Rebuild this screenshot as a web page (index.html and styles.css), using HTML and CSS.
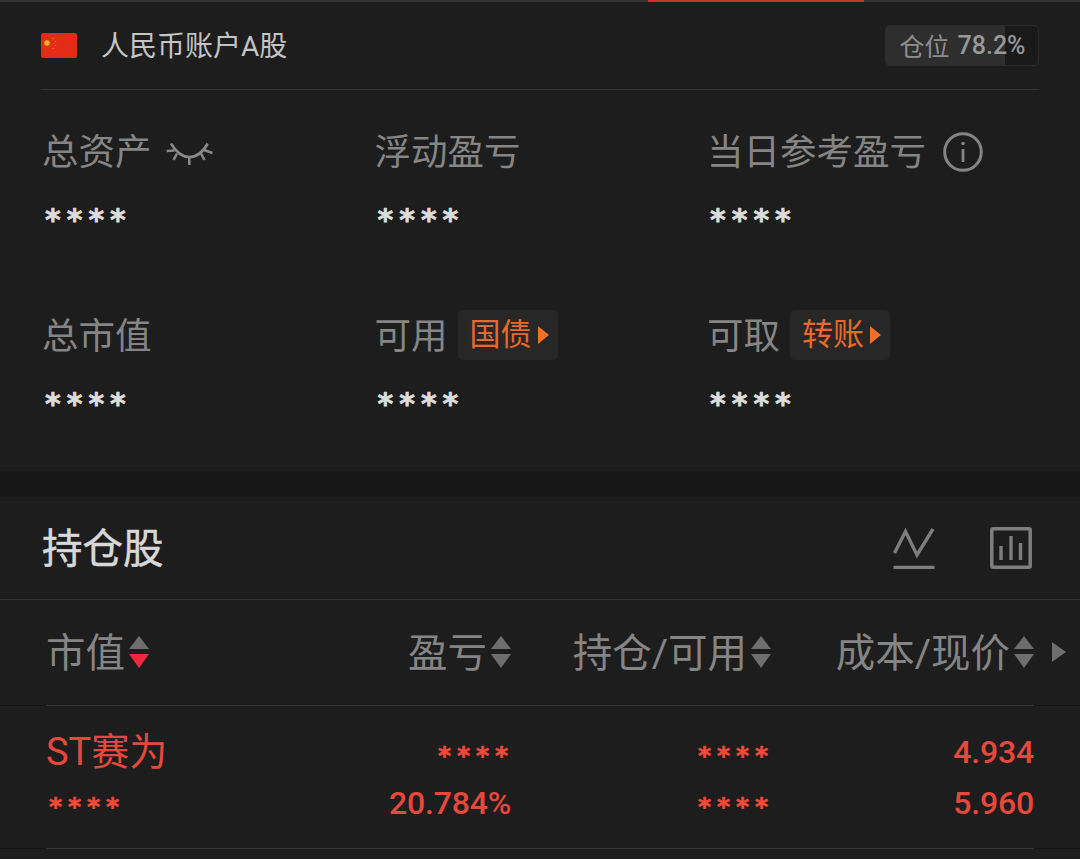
FILE: index.html
```html
<!DOCTYPE html>
<html lang="zh-CN">
<head>
<meta charset="utf-8">
<title>持仓</title>
<link rel="stylesheet" href="styles.css">
</head>
<body>
<div class="page">
  <section class="account">
    <div class="tabline"><span class="tabmark"></span></div>
    <div class="account-head">
      <svg class="flag" viewBox="0 0 36 25" width="36" height="25">
        <rect width="36" height="25" rx="2" fill="#e32b17"/>
        <circle cx="6" cy="10" r="2.800" fill="#f5b21a"/>
        <circle cx="12" cy="5.500" r=".8" fill="#f0801a"/>
        <circle cx="14.500" cy="8.500" r=".8" fill="#f0801a"/>
        <circle cx="14.500" cy="12.500" r=".8" fill="#f0801a"/>
        <circle cx="12" cy="15.500" r=".8" fill="#f0801a"/>
      </svg>
      <span class="account-name">人民币账户A股</span>
      <span class="position">仓位 <b class="position-num">78.2%</b></span>
    </div>
    <div class="metrics">
      <div class="metric">
        <div class="label">总资产
          <svg class="eye" viewBox="0 0 47 23" width="47" height="23" fill="none" stroke="#888" stroke-width="2.600">
            <path d="M5 1.500C10 10 16 15 23.300 15S37 10 41.700 1.500"/>
            <path d="M.7 9 8.500 8.500M11 11.500 7.600 18M23.300 15V23M35 11.500 38.500 18M38 8 46.500 11"/>
          </svg>
        </div>
        <div class="stars">****</div>
      </div>
      <div class="metric">
        <div class="label">浮动盈亏</div>
        <div class="stars">****</div>
      </div>
      <div class="metric">
        <div class="label">当日参考盈亏
          <svg class="info" viewBox="0 0 40 40" width="40" height="40" fill="none" stroke="#858585">
            <circle cx="20" cy="20" r="18.300" stroke-width="3"/>
            <path d="M20 17V30" stroke-width="2.800"/>
            <circle cx="20" cy="11.500" r="1.800" fill="#858585" stroke="none"/>
          </svg>
        </div>
        <div class="stars">****</div>
      </div>
      <div class="metric">
        <div class="label">总市值</div>
        <div class="stars">****</div>
      </div>
      <div class="metric">
        <div class="label">可用<span class="action">国债<i class="action-arrow"></i></span></div>
        <div class="stars">****</div>
      </div>
      <div class="metric">
        <div class="label">可取<span class="action">转账<i class="action-arrow"></i></span></div>
        <div class="stars">****</div>
      </div>
    </div>
  </section>

  <section class="holdings">
    <div class="holdings-head">
      <h2 class="holdings-title">持仓股</h2>
      <svg class="tool-line" viewBox="0 0 42 41" width="42" height="41" fill="none" stroke="#7d7d7d" stroke-width="3.400">
        <path d="M1.500 25 12.500 3.500 24 27 40 1"/>
        <path d="M.5 39.500H41.500"/>
      </svg>
      <svg class="tool-bars" viewBox="0 0 42 42" width="42" height="42" fill="none" stroke="#7d7d7d">
        <rect x="1.800" y="1.800" width="38.400" height="38.400" rx="1.500" stroke-width="3.500"/>
        <path d="M11 19V33M21 9V33M30.500 16V33" stroke-width="3.400"/>
      </svg>
    </div>

    <div class="band band-head">
      <div class="cols cols-head">
        <div class="th th-left">市值
          <svg class="sort" viewBox="0 0 20 33" width="20" height="33"><path d="M10 0 20 13H0Z" fill="#6e6e6e"/><path d="M0 18H20L10 32Z" fill="#f0283c"/></svg>
        </div>
        <div class="th">盈亏
          <svg class="sort" viewBox="0 0 20 33" width="20" height="33"><path d="M10 0 20 13H0Z" fill="#6e6e6e"/><path d="M0 18H20L10 32Z" fill="#6e6e6e"/></svg>
        </div>
        <div class="th">持仓/可用
          <svg class="sort" viewBox="0 0 20 33" width="20" height="33"><path d="M10 0 20 13H0Z" fill="#6e6e6e"/><path d="M0 18H20L10 32Z" fill="#6e6e6e"/></svg>
        </div>
        <div class="th">成本/现价
          <svg class="sort" viewBox="0 0 20 33" width="20" height="33"><path d="M10 0 20 13H0Z" fill="#6e6e6e"/><path d="M0 18H20L10 32Z" fill="#6e6e6e"/></svg>
        </div>
      </div>
      <i class="more"></i>
    </div>

    <div class="band band-row">
      <div class="cols cols-row">
        <div class="cell cell-left">
          <div class="name">ST赛为</div>
          <div class="stars-red">****</div>
        </div>
        <div class="cell">
          <div class="stars-red">****</div>
          <div class="num">20.784%</div>
        </div>
        <div class="cell">
          <div class="stars-red">****</div>
          <div class="stars-red">****</div>
        </div>
        <div class="cell">
          <div class="num">4.934</div>
          <div class="num">5.960</div>
        </div>
      </div>
    </div>
  </section>
</div>
</body>
</html>
```

FILE: styles.css
```css
* { box-sizing: border-box; }
html, body { margin: 0; padding: 0; }
body {
  width: 1080px;
  height: 859px;
  overflow: hidden;
  background: #171717;
  font-family: "Roboto", "Noto Sans CJK SC", sans-serif;
}
.page { display: flex; flex-direction: column; gap: 26px; }

.account { height: 471px; background: #1d1d1d; }
.tabline { height: 2px; background: #333; position: relative; }
.tabmark { display: block; height: 2px; width: 216px; margin-left: 648px; background: #c8342f; }
.account-head {
  display: flex;
  align-items: center;
  height: 88px;
  margin: 0 41px;
  border-bottom: 1px solid #333;
}
.flag { flex: none; }
.account-name { margin-left: 24px; margin-bottom: 4px; font-size: 28px; color: #c4c4c4; }
.position {
  margin-left: auto;
  width: 154px;
  height: 41px;
  display: flex;
  align-items: center;
  justify-content: center;
  gap: 8px;
  padding: 0 0 1px 1px;
  border: 1px solid #2b2b2b;
  border-radius: 5px;
  background: linear-gradient(to right, #2e2e2e 78.2%, #1a1a1a 78.2%);
  font-size: 25px;
  color: #8e8e8e;
}
.position-num { font-weight: 500; font-size: 25px; color: #989898; }

.metrics {
  display: grid;
  grid-template-columns: 332.500px 332.500px 1fr;
  grid-auto-rows: 184px;
  padding: 38px 0 0 42px;
}
.label {
  display: flex;
  align-items: center;
  height: 50px;
  font-size: 36.500px;
  line-height: 50px;
  color: #858585;
}
.eye { margin-left: 14px; margin-top: 1px; }
.info { margin-left: 17px; margin-top: -2px; }
.action {
  display: flex;
  align-items: center;
  height: 50px;
  margin-left: 10px;
  margin-top: -4px;
  padding: 0 9px 0 12px;
  border-radius: 5px;
  background: #272727;
  font-size: 31px;
  color: #e8692a;
}
.action-arrow {
  width: 0;
  height: 0;
  margin-left: 6px;
  border-left: 11px solid #f0702a;
  border-top: 9.500px solid transparent;
  border-bottom: 9.500px solid transparent;
}
.stars {
  margin-top: 17px;
  margin-left: 3px;
  height: 32px;
  font-family: "DejaVu Sans", sans-serif;
  font-weight: 700;
  font-size: 30px;
  line-height: 50px;
  letter-spacing: 6px;
  color: #dcdcdc;
  -webkit-text-stroke: 0.7px #dcdcdc;
}

.holdings { height: 362px; background: #1d1d1d; }
.holdings-head {
  display: flex;
  align-items: center;
  height: 103px;
  padding: 0 48px 0 42px;
  border-bottom: 1px solid #333;
}
.holdings-title {
  margin: -6px auto 0 0;
  font-size: 40.500px;
  font-weight: 400;
  color: #d8d8d8;
  -webkit-text-stroke: 0.5px #d8d8d8;
}
.tool-bars { margin-left: 55px; }

.band {
  display: flex;
  padding-left: 46px;
  border-bottom: 1px solid #141414;
}
.band-head { height: 106px; align-items: stretch; }
.band-row { height: 143px; }
.cols {
  display: grid;
  grid-template-columns: 201px 264px 260px 263px;
  width: 988px;
  margin-bottom: -1px;
  border-bottom: 1px solid #353535;
}
.th {
  display: flex;
  align-items: center;
  justify-content: flex-end;
  padding-bottom: 6px;
  font-size: 39.500px;
  color: #858585;
  white-space: nowrap;
}
.th-left { justify-content: flex-start; }
.sort { margin-left: 4px; margin-top: 6px; }
.more {
  width: 0;
  height: 0;
  margin: 42px 0 0 18px;
  border-left: 14px solid #6e6e6e;
  border-top: 10.500px solid transparent;
  border-bottom: 10.500px solid transparent;
}
.cell {
  display: flex;
  flex-direction: column;
  align-items: flex-end;
  justify-content: flex-start;
  padding-top: 20px;
  gap: 5px;
}
.cell-left { align-items: flex-start; }
.name { height: 46px; font-size: 38px; line-height: 52px; color: #e8473b; white-space: nowrap; }
.num { height: 46px; font-size: 32px; font-weight: 500; line-height: 52px; letter-spacing: -0.2px; color: #e8473b; }
.stars-red {
  height: 46px;
  margin-right: -3px;
  font-family: "DejaVu Sans", sans-serif;
  font-weight: 700;
  font-size: 25px;
  line-height: 59px;
  letter-spacing: 5.900px;
  color: #f04a3a;
  -webkit-text-stroke: 0.6px #f04a3a;
}
.cell-left .stars-red { padding-left: 3px; }
```
